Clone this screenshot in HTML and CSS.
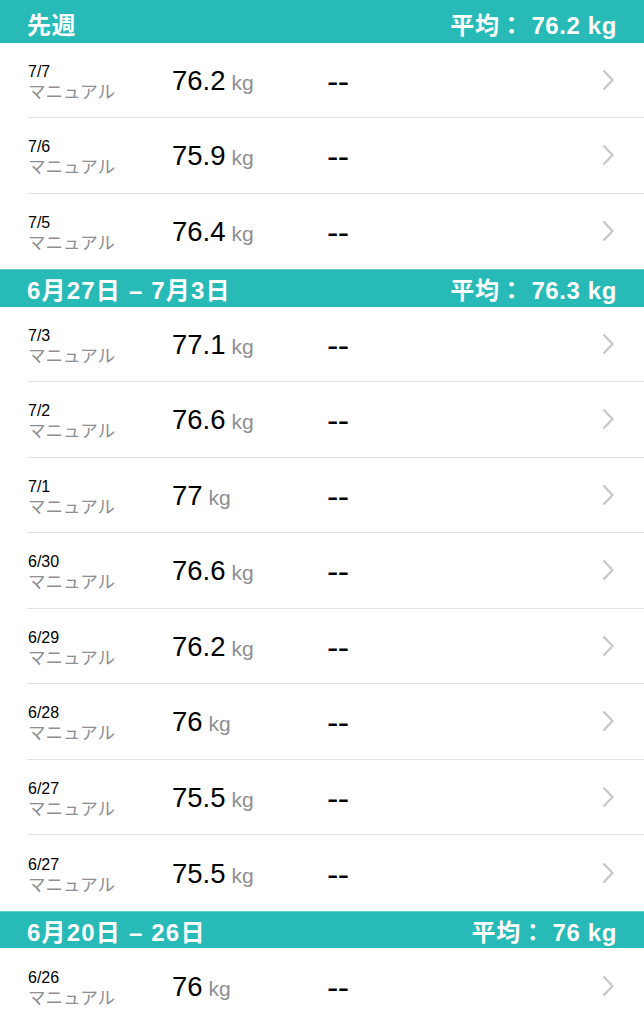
FILE: index.html
```html
<!DOCTYPE html>
<html lang="ja">
<head>
  <meta charset="UTF-8">
  <meta name="viewport" content="width=device-width, initial-scale=1.0">
  <title>体重</title>
  <link rel="stylesheet" href="styles.css">
</head>
<body>
  <div class="list">
    <div class="week-header first">
      <span>先週</span>
      <span>平均： 76.2 kg</span>
    </div>
    <div class="row"><div class="row-inner">
      <div class="date"><span class="day">7/7</span><span class="source">マニュアル</span></div>
      <div class="weight">76.2<span class="unit">kg</span></div>
      <div class="fat">--</div>
      <svg class="chevron" viewBox="0 0 12 22"><path d="M1.5 1.5 L10.5 11 L1.5 20.5"/></svg>
    </div></div>
    <div class="row"><div class="row-inner">
      <div class="date"><span class="day">7/6</span><span class="source">マニュアル</span></div>
      <div class="weight">75.9<span class="unit">kg</span></div>
      <div class="fat">--</div>
      <svg class="chevron" viewBox="0 0 12 22"><path d="M1.5 1.5 L10.5 11 L1.5 20.5"/></svg>
    </div></div>
    <div class="row last"><div class="row-inner">
      <div class="date"><span class="day">7/5</span><span class="source">マニュアル</span></div>
      <div class="weight">76.4<span class="unit">kg</span></div>
      <div class="fat">--</div>
      <svg class="chevron" viewBox="0 0 12 22"><path d="M1.5 1.5 L10.5 11 L1.5 20.5"/></svg>
    </div></div>

    <div class="week-header">
      <span class="range">6月27日 – 7月3日</span>
      <span>平均： 76.3 kg</span>
    </div>
    <div class="row"><div class="row-inner">
      <div class="date"><span class="day">7/3</span><span class="source">マニュアル</span></div>
      <div class="weight">77.1<span class="unit">kg</span></div>
      <div class="fat">--</div>
      <svg class="chevron" viewBox="0 0 12 22"><path d="M1.5 1.5 L10.5 11 L1.5 20.5"/></svg>
    </div></div>
    <div class="row"><div class="row-inner">
      <div class="date"><span class="day">7/2</span><span class="source">マニュアル</span></div>
      <div class="weight">76.6<span class="unit">kg</span></div>
      <div class="fat">--</div>
      <svg class="chevron" viewBox="0 0 12 22"><path d="M1.5 1.5 L10.5 11 L1.5 20.5"/></svg>
    </div></div>
    <div class="row"><div class="row-inner">
      <div class="date"><span class="day">7/1</span><span class="source">マニュアル</span></div>
      <div class="weight">77<span class="unit">kg</span></div>
      <div class="fat">--</div>
      <svg class="chevron" viewBox="0 0 12 22"><path d="M1.5 1.5 L10.5 11 L1.5 20.5"/></svg>
    </div></div>
    <div class="row"><div class="row-inner">
      <div class="date"><span class="day">6/30</span><span class="source">マニュアル</span></div>
      <div class="weight">76.6<span class="unit">kg</span></div>
      <div class="fat">--</div>
      <svg class="chevron" viewBox="0 0 12 22"><path d="M1.5 1.5 L10.5 11 L1.5 20.5"/></svg>
    </div></div>
    <div class="row"><div class="row-inner">
      <div class="date"><span class="day">6/29</span><span class="source">マニュアル</span></div>
      <div class="weight">76.2<span class="unit">kg</span></div>
      <div class="fat">--</div>
      <svg class="chevron" viewBox="0 0 12 22"><path d="M1.5 1.5 L10.5 11 L1.5 20.5"/></svg>
    </div></div>
    <div class="row"><div class="row-inner">
      <div class="date"><span class="day">6/28</span><span class="source">マニュアル</span></div>
      <div class="weight">76<span class="unit">kg</span></div>
      <div class="fat">--</div>
      <svg class="chevron" viewBox="0 0 12 22"><path d="M1.5 1.5 L10.5 11 L1.5 20.5"/></svg>
    </div></div>
    <div class="row"><div class="row-inner">
      <div class="date"><span class="day">6/27</span><span class="source">マニュアル</span></div>
      <div class="weight">75.5<span class="unit">kg</span></div>
      <div class="fat">--</div>
      <svg class="chevron" viewBox="0 0 12 22"><path d="M1.5 1.5 L10.5 11 L1.5 20.5"/></svg>
    </div></div>
    <div class="row last"><div class="row-inner">
      <div class="date"><span class="day">6/27</span><span class="source">マニュアル</span></div>
      <div class="weight">75.5<span class="unit">kg</span></div>
      <div class="fat">--</div>
      <svg class="chevron" viewBox="0 0 12 22"><path d="M1.5 1.5 L10.5 11 L1.5 20.5"/></svg>
    </div></div>

    <div class="week-header">
      <span class="range">6月20日 – 26日</span>
      <span>平均： 76 kg</span>
    </div>
    <div class="row last"><div class="row-inner">
      <div class="date"><span class="day">6/26</span><span class="source">マニュアル</span></div>
      <div class="weight">76<span class="unit">kg</span></div>
      <div class="fat">--</div>
      <svg class="chevron" viewBox="0 0 12 22"><path d="M1.5 1.5 L10.5 11 L1.5 20.5"/></svg>
    </div></div>
  </div>
</body>
</html>
```

FILE: styles.css
```css
body {
  margin: 0;
  font-family: "Liberation Sans", "Noto Sans CJK JP", sans-serif;
  background: #fff;
  color: #000;
}

.list {
  display: flex;
  flex-direction: column;
}

.week-header {
  display: flex;
  justify-content: space-between;
  align-items: center;
  height: 37.5px;
  box-sizing: border-box;
  padding: 1px 27px 0 27px;
  background: #27bab7;
  border-top: 1px solid #5fcdca;
  color: #fff;
  font-size: 24px;
  font-weight: bold;
  letter-spacing: 0.6px;
}

.week-header .range {
  letter-spacing: 1.2px;
}

.week-header.first {
  height: 42.5px;
  padding-top: 5px;
  border-top: none;
}

.row {
  height: 75.5px;
  padding-left: 27px;
}

.row-inner {
  display: flex;
  align-items: center;
  height: 100%;
  box-sizing: border-box;
  border-bottom: 1.5px solid #e2e2e4;
  padding-left: 1px;
}

.row.last .row-inner {
  border-bottom: none;
}

.date {
  display: flex;
  flex-direction: column;
  width: 144px;
  padding-top: 4px;
}

.day {
  font-size: 16px;
  line-height: 20px;
}

.source {
  font-size: 17.5px;
  line-height: 20px;
  color: #8e8e93;
}

.weight {
  width: 155px;
  font-size: 27.5px;
  padding-top: 2px;
}

.unit {
  font-size: 21px;
  color: #8e8e93;
  margin-left: 6px;
}

.fat {
  flex: 1;
  font-size: 34px;
  line-height: 34px;
  letter-spacing: -0.5px;
  padding-top: 2px;
}

.chevron {
  width: 12px;
  height: 22px;
  margin-right: 30px;
  fill: none;
  stroke: #c7c7cc;
  stroke-width: 2.3;
}
```
